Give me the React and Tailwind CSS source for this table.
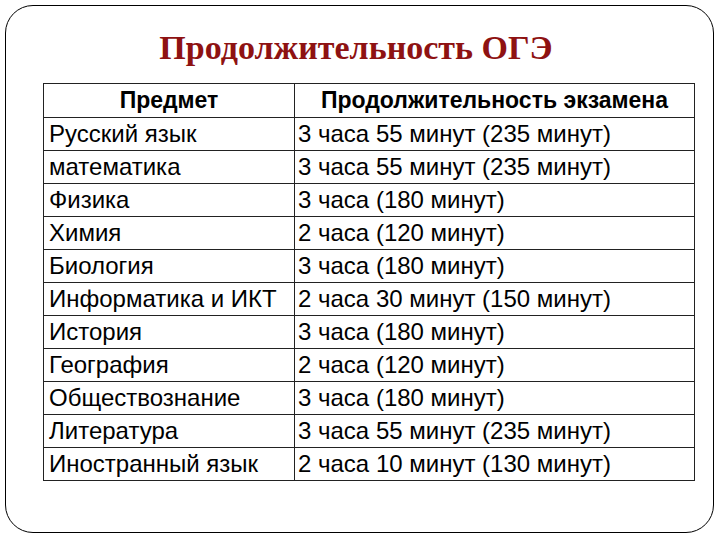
import React from 'react';

const rows = [
  ['Русский язык', '3 часа 55 минут (235 минут)'],
  ['математика', '3 часа 55 минут (235 минут)'],
  ['Физика', '3 часа (180 минут)'],
  ['Химия', '2 часа (120 минут)'],
  ['Биология', '3 часа (180 минут)'],
  ['Информатика и ИКТ', '2 часа 30 минут (150 минут)'],
  ['История', '3 часа (180 минут)'],
  ['География', '2 часа (120 минут)'],
  ['Обществознание', '3 часа (180 минут)'],
  ['Литература', '3 часа 55 минут (235 минут)'],
  ['Иностранный язык', '2 часа 10 минут (130 минут)'],
];

export default function App() {
  return (
    <div className="w-[720px] h-[540px] bg-white p-[5px] overflow-hidden">
      <div className="w-[709px] h-[528px] border border-black rounded-[28px] pt-[22px] pl-[37px]">
        <h1 className="w-[652px] pr-[26px] text-center text-[34px] leading-[40px] font-bold text-[#8e1212] font-['Liberation_Serif',serif]">
          Продолжительность ОГЭ
        </h1>
        <table className="mt-[15px] w-[652px] border-collapse font-['Liberation_Sans',Arial,sans-serif] text-[24px] text-black">
          <thead>
            <tr className="h-[34px]">
              <th className="w-[251px] border border-[#222] font-bold text-[23px] text-center leading-none">Предмет</th>
              <th className="border border-[#222] font-bold text-[23px] text-center leading-none">Продолжительность экзамена</th>
            </tr>
          </thead>
          <tbody>
            {rows.map(([a, b]) => (
              <tr key={a} className="h-[33px]">
                <td className="border border-[#222] pl-[5px] leading-none whitespace-nowrap">{a}</td>
                <td className="border border-[#222] pl-[3px] leading-none whitespace-nowrap">{b}</td>
              </tr>
            ))}
          </tbody>
        </table>
      </div>
    </div>
  );
}
